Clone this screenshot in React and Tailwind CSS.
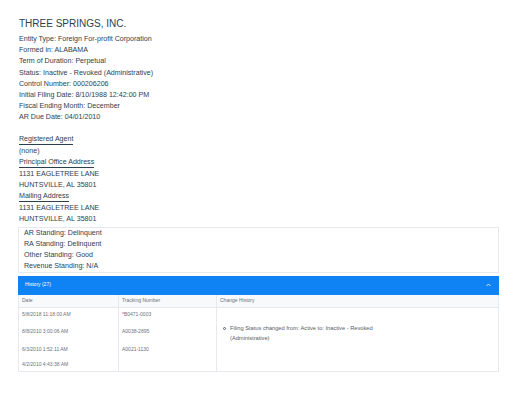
import React from 'react';

const details = [
  'Entity Type: Foreign For-profit Corporation',
  'Formed in: ALABAMA',
  'Term of Duration: Perpetual',
  'Status: Inactive - Revoked (Administrative)',
  'Control Number: 000206206',
  'Initial Filing Date: 8/10/1988 12:42:00 PM',
  'Fiscal Ending Month: December',
  'AR Due Date: 04/01/2010',
];

const standings = [
  'AR Standing: Delinquent',
  'RA Standing: Delinquent',
  'Other Standing: Good',
  'Revenue Standing: N/A',
];

const history = [
  { date: '5/8/2018 11:18:00 AM', tracking: '*B0471-0003', h: 'h-[15px]' },
  { date: '8/8/2010 3:00:06 AM', tracking: 'A0038-2895', h: 'h-[19px]' },
  { date: '6/3/2010 1:52:11 AM', tracking: 'A0021-1130', h: 'h-[17px]' },
  { date: '4/2/2010 4:43:38 AM', tracking: '', h: 'h-[12px]' },
];

function Heading({ children }) {
  return (
    <div className="w-fit leading-[9px] my-[1px] border-b border-[#2d3e50]">{children}</div>
  );
}

export default function App() {
  return (
    <div className="w-[518px] h-[400px] bg-white text-[#2d3e50] font-['Liberation_Sans',Arial,sans-serif] pl-[18px] pt-[18px]">
      {/* Entity header */}
      <h1 className="text-[10px] leading-[12px] pl-[1px]">THREE SPRINGS, INC.</h1>
      <div className="text-[7.1px] leading-[11.2px] mt-[4px] pl-[1px]">
        {details.map((d) => (
          <div key={d}>{d}</div>
        ))}
      </div>

      {/* Agent / addresses */}
      <div className="text-[7.1px] leading-[11.2px] mt-[11px] pl-[1px]">
        <Heading>Registered Agent</Heading>
        <div>(none)</div>
        <Heading>Principal Office Address</Heading>
        <div>1131 EAGLETREE LANE</div>
        <div>HUNTSVILLE, AL 35801</div>
        <Heading>Mailing Address</Heading>
        <div>1131 EAGLETREE LANE</div>
        <div>HUNTSVILLE, AL 35801</div>
      </div>

      {/* Standing box */}
      <div className="w-[481px] border border-[#e6eaef] pl-[5px] text-[7.1px] leading-[11px] mt-[1px]">
        {standings.map((s) => (
          <div key={s}>{s}</div>
        ))}
      </div>

      {/* History panel */}
      <div className="w-[481px] mt-[3px]">
        <div className="h-[19px] bg-[#0f83f3] flex items-center justify-between pl-[7px] pr-[8px] text-white text-[5px]">
          <span>History (27)</span>
          <svg width="5" height="4" viewBox="0 0 10 6" fill="none" stroke="white" strokeWidth="1.6">
            <path d="M1 5 L5 1 L9 5" />
          </svg>
        </div>
        <div className="border-x border-b border-[#e6eaef] text-[#6b7280] text-[5px]">
          <div className="grid grid-cols-[99px_98px_1fr] h-[13px] bg-[#f7f9fb] border-b border-[#e6eaef] items-center">
            <div className="pl-[3px]">Date</div>
            <div className="pl-[3px] h-full flex items-center border-l border-[#e6eaef]">Tracking Number</div>
            <div className="pl-[3px] h-full flex items-center border-l border-[#e6eaef]">Change History</div>
          </div>
          <div className="grid grid-cols-[99px_98px_1fr]">
            <div>
              {history.map((r) => (
                <div key={r.date} className={`${r.h} flex items-center pl-[3px]`}>{r.date}</div>
              ))}
            </div>
            <div className="border-l border-[#e6eaef]">
              {history.map((r) => (
                <div key={r.date} className={`${r.h} flex items-center pl-[3px]`}>{r.tracking}</div>
              ))}
            </div>
            <div className="border-l border-[#e6eaef] pt-[15px] pl-[6px] text-[5.7px] leading-[10px] text-[#555c66]">
              <div className="flex gap-[4px]">
                <span className="mt-[4px] w-[3px] h-[3px] rounded-full border-[0.6px] border-[#555c66] shrink-0"></span>
                <span className="w-[155px]">Filing Status changed from: Active to: Inactive - Revoked (Administrative)</span>
              </div>
            </div>
          </div>
        </div>
      </div>
    </div>
  );
}
